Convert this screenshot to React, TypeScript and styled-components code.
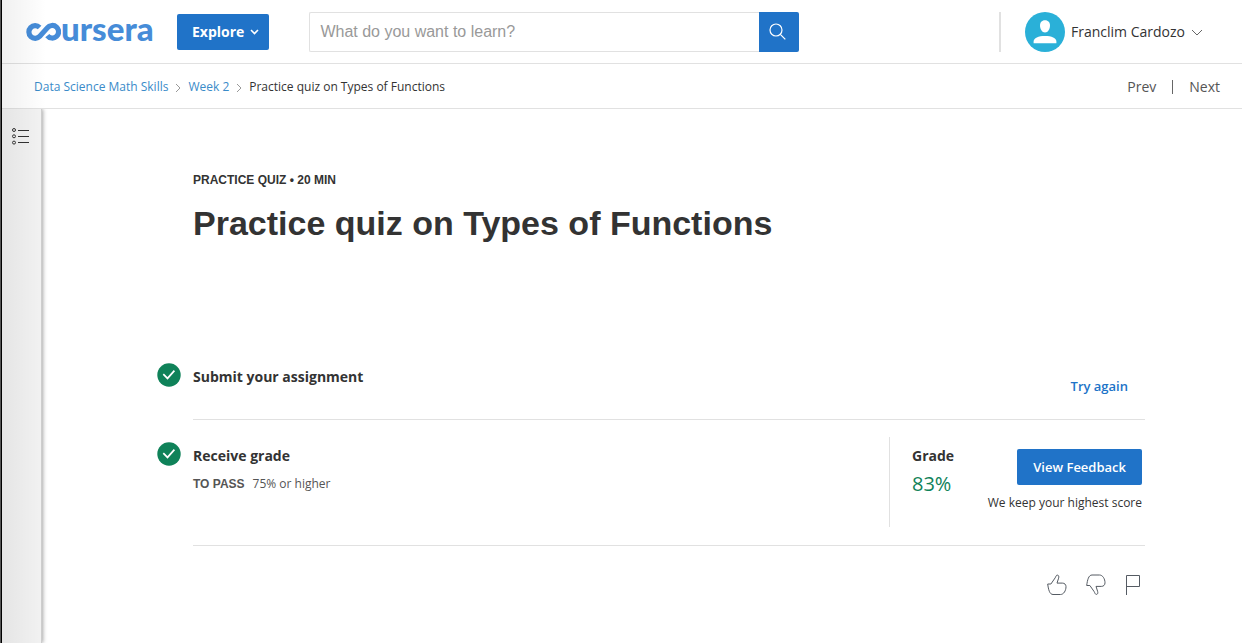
import React from 'react';
import styled, { createGlobalStyle } from 'styled-components';

const GlobalStyle = createGlobalStyle`
  *, *::before, *::after { box-sizing: border-box; }
  body {
    margin: 0;
    background: #fff;
    color: #333;
    font-family: "Open Sans", "Noto Sans", sans-serif;
    font-size: 14px;
    line-height: 20px;
  }
  a { text-decoration: none; }
  button { font: inherit; cursor: pointer; }
  h1, h2, h3, p, ol { margin: 0; padding: 0; }
  ol { list-style: none; }
`;

const Page = styled.div`
  position: relative;
  min-height: 100vh;
  display: flex;
  flex-direction: column;
  padding-left: 1px;
  border-left: 1px solid #555;
  box-shadow: inset 1px 0 #000;
  &::after {
    content: "";
    position: absolute;
    inset: 0 auto 0 1px;
    width: 44px;
    pointer-events: none;
    background: linear-gradient(to right, rgba(0, 0, 0, 0.06), rgba(0, 0, 0, 0));
  }
`;

const Header = styled.header`
  display: flex;
  align-items: center;
  height: 64px;
  padding: 0 39px 0 24px;
  border-bottom: 1px solid #e1e1e1;
`;

const Logo = styled.a`
  display: flex;
  align-items: center;
  width: 127px;
  margin-right: 24px;
  color: #468cd8;
  font: 900 33px/34px Lato, sans-serif;
`;

const LogoMark = styled.svg`
  flex: none;
`;

const LogoText = styled.span`
  height: 42px;
`;

const PrimaryButton = styled.button<{ $bold?: boolean }>`
  display: flex;
  align-items: center;
  justify-content: center;
  gap: 6px;
  height: 36px;
  padding: 0 ${p => (p.$bold ? 10 : 16)}px 0 ${p => (p.$bold ? 15 : 16)}px;
  border: 0;
  border-radius: 2px;
  background: #2073c8;
  color: #fff;
  font-size: ${p => (p.$bold ? 14 : 13)}px;
  font-weight: ${p => (p.$bold ? 700 : 600)};
  white-space: nowrap;
`;

const SearchForm = styled.form`
  display: flex;
  flex: 0 1 490px;
  height: 40px;
  margin: 0 auto 0 40px;
`;

const SearchInput = styled.input`
  flex: 1;
  min-width: 0;
  padding: 0 10px;
  border: 1px solid #e1e1e1;
  border-right: 0;
  border-radius: 2px 0 0 2px;
  font: 16px/20px "Liberation Sans", Arial, sans-serif;
  color: #333;
  &::placeholder { color: #999; opacity: 1; }
`;

const SearchButton = styled.button`
  display: flex;
  align-items: center;
  justify-content: center;
  width: 40px;
  padding: 0 4px 0 0;
  border: 0;
  border-radius: 0 2px 2px 0;
  background: #2073c8;
`;

const Account = styled.div`
  display: flex;
  align-items: center;
  height: 40px;
  padding-left: 24px;
  border-left: 2px solid #e1e1e1;
`;

const AccountButton = styled.button`
  display: flex;
  align-items: center;
  gap: 6px;
  padding: 0;
  border: 0;
  background: none;
  color: #333;
  white-space: nowrap;
`;

const SubHeader = styled.div`
  display: flex;
  align-items: center;
  justify-content: space-between;
  height: 45px;
  padding: 2px 22px 0 32px;
  border-bottom: 1px solid #e1e1e1;
`;

const Breadcrumbs = styled.ol`
  display: flex;
  align-items: center;
  gap: 7px;
  font-size: 12px;
`;

const Crumb = styled.li`
  display: flex;
  align-items: center;
  gap: 7px;
  a { color: #3a8bc9; }
`;

const Pager = styled.nav`
  display: flex;
  align-items: center;
  gap: 16px;
  a { color: #555; }
`;

const PagerRule = styled.span`
  width: 1px;
  height: 14px;
  background: #666;
`;

const Body = styled.div`
  flex: 1;
  display: flex;
`;

const Sidebar = styled.aside`
  width: 40px;
  padding: 18px 9px;
  background: #f3f3f3;
  border-right: 1px solid #cecece;
  box-shadow: 1px 0 4px rgba(0, 0, 0, 0.35);
  clip-path: inset(0 -6px 0 0);
`;

const IconButton = styled.button`
  display: flex;
  padding: 0;
  border: 0;
  background: none;
`;

const Main = styled.main`
  flex: 1;
  padding: 61px 97px 40px 151px;
`;

const Kicker = styled.p`
  font: 700 12px/20px "Liberation Sans", Arial, sans-serif;
`;

const Title = styled.h1`
  margin-top: 13px;
  font: 700 34px/40px "Liberation Sans", Arial, sans-serif;
`;

const Steps = styled.ol`
  margin-top: 109px;
`;

const Step = styled.li<{ $tall?: boolean }>`
  display: flex;
  align-items: flex-start;
  justify-content: space-between;
  height: ${p => (p.$tall ? 126 : 68)}px;
  padding-top: ${p => (p.$tall ? 17 : 0)}px;
  border-bottom: 1px solid #e1e1e1;
`;

const StepText = styled.div<{ $tall?: boolean }>`
  display: flex;
  gap: 12px;
  margin: ${p => (p.$tall ? 5 : 11)}px 0 0 -36px;
`;

const StepTitle = styled.h2`
  padding-top: 4px;
  font-size: 14px;
  line-height: 20px;
  font-weight: 700;
`;

const PassLine = styled.p`
  display: flex;
  gap: 8px;
  margin-top: 8px;
  font-size: 12px;
  color: #555;
  strong { font-family: "Liberation Sans", Arial, sans-serif; }
`;

const TryAgain = styled.a`
  margin: 24px 17px 0 0;
  color: #2073c8;
  font-size: 13px;
  font-weight: 600;
`;

const GradePanel = styled.div`
  display: flex;
  justify-content: space-between;
  width: 256px;
  height: 90px;
  padding: 9px 3px 0 22px;
  border-left: 1px solid #e1e1e1;
`;

const GradeTitle = styled.h3`
  font-size: 14px;
  line-height: 20px;
  font-weight: 700;
`;

const GradeValue = styled.p`
  margin-top: 4px;
  font-size: 20px;
  line-height: 28px;
  color: #0f8259;
`;

const Feedback = styled.div`
  display: flex;
  flex-direction: column;
  align-items: flex-end;
  gap: 8px;
  padding-top: 3px;
  font-size: 12px;
  white-space: nowrap;
`;

const Reactions = styled.div`
  display: flex;
  justify-content: flex-end;
  gap: 19px;
  margin: 28px 4px 0 0;
`;

const CheckIcon = () => (
  <svg width="24" height="24" viewBox="0 0 24 24" aria-hidden="true">
    <circle cx="12" cy="12" r="11.7" fill="#0f8259" />
    <path d="M6.3 11.2l4.2 4.2 6.9-7.8" fill="none" stroke="#fff" strokeWidth="1.7" />
  </svg>
);

const CrumbArrow = () => (
  <svg width="6" height="10" viewBox="0 0 6 10" aria-hidden="true">
    <path d="M1 2l4 4-4 4" fill="none" stroke="#999" />
  </svg>
);

const ThumbUp = () => (
  <path
    d="M.7 10h3.200l4.300-6.200c.7-1.200 1-2.800 2.200-2.700 1.400.1 1.700 1.600 1.200 3.100l-1.600 4.900h5.300c2.300 0 3.700 1.400 3.700 3.600 0 3.900-2.300 7.800-5.500 7.800H6C2.600 20.500 1.400 15.500.7 10z"
    fill="none"
    stroke="#555b63"
  />
);

export default function App() {
  return (
    <>
      <GlobalStyle />
      <Page>
        <Header>
          <Logo href="#" aria-label="coursera">
            <LogoMark width="35" height="20" viewBox="0 0 35 20" aria-hidden="true">
              <path
                d="M13.600 5.500A6.300 6.300 0 1 0 13.800 14.300L21.300 5.900A6.300 6.300 0 1 1 21.300 13.600"
                fill="none"
                stroke="#468cd8"
                strokeWidth="5.200"
              />
            </LogoMark>
            <LogoText>ursera</LogoText>
          </Logo>
          <PrimaryButton type="button" $bold>
            Explore
            <svg width="9" height="6" viewBox="0 0 9 6" aria-hidden="true">
              <path d="M1 1l3.500 3.500L8 1" fill="none" stroke="#fff" strokeWidth="1.600" />
            </svg>
          </PrimaryButton>
          <SearchForm role="search">
            <SearchInput type="text" aria-label="Search" placeholder="What do you want to learn?" />
            <SearchButton type="submit" aria-label="Submit search">
              <svg width="17" height="17" viewBox="0 0 17 17" fill="none" stroke="#fff" strokeWidth="1.200" aria-hidden="true">
                <circle cx="7" cy="7" r="6" />
                <path d="M11.300 11.300l5 5" />
              </svg>
            </SearchButton>
          </SearchForm>
          <Account>
            <AccountButton type="button">
              <svg width="40" height="40" viewBox="0 0 40 40" aria-hidden="true">
                <circle cx="20" cy="20" r="20" fill="#2ab0d8" />
                <path d="M20 8.300c3.300 0 5 2.300 5 5.200 0 3.500-2 7-5 7s-5-3.500-5-7c0-2.900 1.700-5.200 5-5.200z" fill="#fff" />
                <path d="M8.600 31.300v-1.600c0-3.800 4.800-5.700 11.400-5.700s11.400 1.900 11.400 5.700v1.600z" fill="#fff" />
              </svg>
              Franclim Cardozo
              <svg width="12" height="8" viewBox="0 0 12 8" aria-hidden="true">
                <path d="M1 2l5 5 5-5" fill="none" stroke="#666" />
              </svg>
            </AccountButton>
          </Account>
        </Header>
        <SubHeader>
          <nav aria-label="Breadcrumb">
            <Breadcrumbs>
              <Crumb><a href="#">Data Science Math Skills</a><CrumbArrow /></Crumb>
              <Crumb><a href="#">Week 2</a><CrumbArrow /></Crumb>
              <Crumb>Practice quiz on Types of Functions</Crumb>
            </Breadcrumbs>
          </nav>
          <Pager aria-label="Lesson">
            <a href="#">Prev</a>
            <PagerRule />
            <a href="#">Next</a>
          </Pager>
        </SubHeader>
        <Body>
          <Sidebar>
            <IconButton type="button" aria-label="Course outline">
              <svg width="19" height="19" viewBox="0 0 19 19" fill="none" stroke="#333" aria-hidden="true">
                <circle cx="3" cy="3" r="1.500" />
                <circle cx="3" cy="9.300" r="1.500" />
                <circle cx="3" cy="15.600" r="1.500" />
                <path d="M7 3.500h11M7 9.500h11M7 15.500h11" />
              </svg>
            </IconButton>
          </Sidebar>
          <Main>
            <Kicker>PRACTICE QUIZ • 20 MIN</Kicker>
            <Title>Practice quiz on Types of Functions</Title>
            <Steps>
              <Step>
                <StepText>
                  <CheckIcon />
                  <StepTitle>Submit your assignment</StepTitle>
                </StepText>
                <TryAgain href="#">Try again</TryAgain>
              </Step>
              <Step $tall>
                <StepText $tall>
                  <CheckIcon />
                  <div>
                    <StepTitle>Receive grade</StepTitle>
                    <PassLine><strong>TO PASS</strong><span>75% or higher</span></PassLine>
                  </div>
                </StepText>
                <GradePanel>
                  <div>
                    <GradeTitle>Grade</GradeTitle>
                    <GradeValue>83%</GradeValue>
                  </div>
                  <Feedback>
                    <PrimaryButton type="button">View Feedback</PrimaryButton>
                    <p>We keep your highest score</p>
                  </Feedback>
                </GradePanel>
              </Step>
            </Steps>
            <Reactions>
              <IconButton type="button" aria-label="Like">
                <svg width="20" height="22" viewBox="0 0 20 22" aria-hidden="true"><ThumbUp /></svg>
              </IconButton>
              <IconButton type="button" aria-label="Dislike">
                <svg width="20" height="22" viewBox="0 0 20 22" aria-hidden="true">
                  <g transform="translate(0 21.5) scale(1 -1)"><ThumbUp /></g>
                </svg>
              </IconButton>
              <IconButton type="button" aria-label="Report an issue">
                <svg width="16" height="22" viewBox="0 0 16 22" fill="none" stroke="#555b63" aria-hidden="true">
                  <path d="M1.500 21V1.500h13v11h-13" />
                </svg>
              </IconButton>
            </Reactions>
          </Main>
        </Body>
      </Page>
    </>
  );
}
